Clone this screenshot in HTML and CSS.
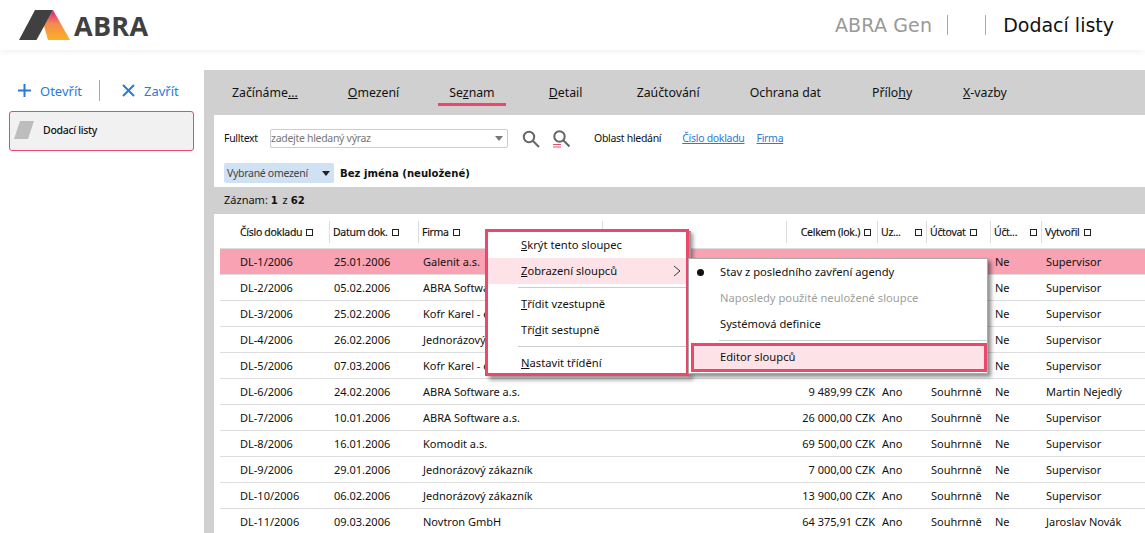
FILE: index.html
```html
<!DOCTYPE html>
<html lang="en">
<head>
  <meta charset="UTF-8">
  <title>Dodací listy</title>
  <link rel="stylesheet" href="styles.css">
</head>
<body>
<header class="top-bar">
  <div class="logo">
    <svg width="51" height="30" viewBox="0 0 51 30">
      <defs>
        <linearGradient id="logoGrad" x1="0.5" y1="0" x2="0.5" y2="1">
          <stop offset="0" stop-color="#e5148c"/>
          <stop offset="0.45" stop-color="#f38a50"/>
          <stop offset="1" stop-color="#fbb024"/>
        </linearGradient>
      </defs>
      <polygon points="34,0 51,30 29,30 25,16" fill="url(#logoGrad)"/>
      <polygon points="0,30 16,0 34,0 17.500,30" fill="#404040"/>
    </svg>
    <span class="logo-text">ABRA</span>
  </div>
  <div class="top-right">
    <span class="app-name">ABRA Gen</span>
    <span class="top-sep"></span>
    <span class="top-gap"></span>
    <span class="top-sep"></span>
    <span class="agenda-name">Dodací listy</span>
  </div>
</header>

<div class="layout">
  <aside class="sidebar">
    <div class="side-actions">
      <a class="side-btn">
        <svg width="15" height="15" viewBox="0 0 15 15"><path d="M7.500 1v13M1 7.500h13" stroke="#2a7ad6" stroke-width="2" fill="none"/></svg>
        Otevřít
      </a>
      <span class="side-sep"></span>
      <a class="side-btn">
        <svg width="15" height="15" viewBox="0 0 15 15"><path d="M2 2l11 11M13 2L2 13" stroke="#2a7ad6" stroke-width="2" fill="none"/></svg>
        Zavřít
      </a>
    </div>
    <div class="side-item">
      <svg width="20" height="18" viewBox="0 0 20 18"><polygon points="6,0 20,0 14,18 0,18" fill="#bdbdbd"/></svg>
      <span>Dodací listy</span>
    </div>
  </aside>

  <main class="main">
    <nav class="tabs">
      <span class="tab">Začínáme<u>...</u></span>
      <span class="tab"><u>O</u>mezení</span>
      <span class="tab active">Se<u>z</u>nam</span>
      <span class="tab"><u>D</u>etail</span>
      <span class="tab">Zaúčtování</span>
      <span class="tab">Ochrana dat</span>
      <span class="tab">Přílo<u>h</u>y</span>
      <span class="tab"><u>X</u>-vazby</span>
    </nav>

    <section class="filter-panel">
      <div class="search-row">
        <span class="search-label">Fulltext</span>
        <div class="search-box">
          <span>zadejte hledaný výraz</span>
          <i class="caret caret-grey"></i>
        </div>
        <svg class="search-icon" width="18" height="18" viewBox="0 0 18 18"><circle cx="7" cy="7" r="5.200" stroke="#666" stroke-width="2" fill="none"/><path d="M11 11l6 6" stroke="#666" stroke-width="2"/></svg>
        <svg class="search-icon" width="18" height="18" viewBox="0 0 18 18"><circle cx="7.500" cy="6.500" r="5.200" stroke="#666" stroke-width="2" fill="none"/><path d="M11.500 10.500l6 6" stroke="#666" stroke-width="2"/><path d="M1 14.500h8M1 17h8" stroke="#e0506e" stroke-width="1"/></svg>
        <span class="scope-label">Oblast hledání</span>
        <a class="scope-link first-link">Číslo dokladu</a>
        <a class="scope-link">Firma</a>
      </div>
      <div class="limit-row">
        <div class="limit-select">Vybrané omezení <i class="caret"></i></div>
        <b class="limit-name">Bez jména (neuložené)</b>
      </div>
    </section>

    <div class="record-bar">Záznam: <b>1</b> z <b>62</b></div>

    <section class="grid">
      <div class="row head">
        <div class="first">Číslo dokladu <i class="box"></i></div>
        <div>Datum dok. <i class="box"></i></div>
        <div>Firma <i class="box"></i></div>
        <div></div>
        <div class="right">Celkem (lok.) <i class="box"></i></div>
        <div class="spread">Uz... <i class="box"></i></div>
        <div>Účtovat <i class="box"></i></div>
        <div class="spread">Účt... <i class="box"></i></div>
        <div>Vytvořil <i class="box"></i></div>
      </div>
      <!-- first five rows: the cells under the menus stay empty -->
      <div class="row selected"><div class="first">DL-1/2006</div><div>25.01.2006</div><div>Galenit a.s.</div><div></div><div></div><div></div><div>Souhrnně</div><div>Ne</div><div>Supervisor</div></div>
      <div class="row"><div class="first">DL-2/2006</div><div>05.02.2006</div><div>ABRA Software a.s.</div><div></div><div></div><div></div><div></div><div>Ne</div><div>Supervisor</div></div>
      <div class="row"><div class="first">DL-3/2006</div><div>25.02.2006</div><div>Kofr Karel - elektro</div><div></div><div></div><div></div><div></div><div>Ne</div><div>Supervisor</div></div>
      <div class="row"><div class="first">DL-4/2006</div><div>26.02.2006</div><div>Jednorázový zákazník</div><div></div><div></div><div></div><div></div><div>Ne</div><div>Supervisor</div></div>
      <div class="row"><div class="first">DL-5/2006</div><div>07.03.2006</div><div>Kofr Karel - elektro</div><div></div><div></div><div></div><div></div><div>Ne</div><div>Supervisor</div></div>
      <div class="row"><div class="first">DL-6/2006</div><div>24.02.2006</div><div>ABRA Software a.s.</div><div></div><div class="right">9 489,99 CZK</div><div>Ano</div><div>Souhrnně</div><div>Ne</div><div>Martin Nejedlý</div></div>
      <div class="row"><div class="first">DL-7/2006</div><div>10.01.2006</div><div>ABRA Software a.s.</div><div></div><div class="right">26 000,00 CZK</div><div>Ano</div><div>Souhrnně</div><div>Ne</div><div>Supervisor</div></div>
      <div class="row"><div class="first">DL-8/2006</div><div>16.01.2006</div><div>Komodit a.s.</div><div></div><div class="right">69 500,00 CZK</div><div>Ano</div><div>Souhrnně</div><div>Ne</div><div>Supervisor</div></div>
      <div class="row"><div class="first">DL-9/2006</div><div>29.01.2006</div><div>Jednorázový zákazník</div><div></div><div class="right">7 000,00 CZK</div><div>Ano</div><div>Souhrnně</div><div>Ne</div><div>Supervisor</div></div>
      <div class="row"><div class="first">DL-10/2006</div><div>06.02.2006</div><div>Jednorázový zákazník</div><div></div><div class="right">13 900,00 CZK</div><div>Ano</div><div>Souhrnně</div><div>Ne</div><div>Supervisor</div></div>
      <div class="row"><div class="first">DL-11/2006</div><div>09.03.2006</div><div>Novtron GmbH</div><div></div><div class="right">64 375,91 CZK</div><div>Ano</div><div>Souhrnně</div><div>Ne</div><div>Jaroslav Novák</div></div>
    </section>
  </main>
</div>

<!-- context menus lie over the grid -->
<div class="menu main-menu">
  <div class="menu-item"><u>S</u>krýt tento sloupec</div>
  <div class="menu-item hover"><u>Z</u>obrazení sloupců
    <svg class="arrow" width="8" height="12" viewBox="0 0 8 12"><path d="M1 1l6 5-6 5" stroke="#333" fill="none"/></svg>
  </div>
  <div class="menu-line"></div>
  <div class="menu-item"><u>T</u>řídit vzestupně</div>
  <div class="menu-item">Tří<u>d</u>it sestupně</div>
  <div class="menu-line"></div>
  <div class="menu-item"><u>N</u>astavit třídění</div>
</div>

<div class="menu sub-menu">
  <div class="menu-item"><i class="dot"></i>Stav z posledního zavření agendy</div>
  <div class="menu-item disabled">Naposledy použité neuložené sloupce</div>
  <div class="menu-item">Systémová definice</div>
  <div class="menu-line"></div>
  <div class="menu-item marked">Editor sloupců</div>
</div>
</body>
</html>
```

FILE: styles.css
```css
* {
  box-sizing: border-box;
}

html, body {
  margin: 0;
  height: 533px;
  overflow: hidden;
}

body {
  background-color: #fff;
  color: #111;
  font-family: "Noto Sans", "Open Sans", sans-serif;
  font-size: 11px;
}

.top-bar {
  display: flex;
  justify-content: space-between;
  align-items: center;
  height: 50px;
  padding: 0 31px 0 19px;
  box-shadow: 0 2px 6px rgba(0, 0, 0, 0.06);
}

.logo {
  display: flex;
  align-items: center;
  gap: 4px;
}

.logo-text {
  font-family: "Open Sans", sans-serif;
  font-weight: 700;
  font-size: 27px;
  letter-spacing: 0.3px;
  color: #404040;
}

.top-right {
  display: flex;
  align-items: center;
  font-family: "DejaVu Sans", sans-serif;
  font-size: 19px;
}

.app-name {
  color: #999;
  letter-spacing: 0.15px;
  margin-right: 15px;
}

.top-sep {
  width: 1px;
  height: 20px;
  background-color: #a9a6bd;
}

.top-gap {
  width: 37px;
}

.agenda-name {
  color: #111;
  margin-left: 17px;
}

.layout {
  display: flex;
  padding-top: 20px;
}

.sidebar {
  width: 204px;
  flex: none;
  padding: 0 10px 0 9px;
}

.side-actions {
  display: flex;
  align-items: center;
  height: 41px;
  padding-left: 8px;
}

.side-btn {
  display: flex;
  align-items: center;
  gap: 8px;
  color: #2a7ad6;
  font-size: 13px;
}

.side-sep {
  width: 1px;
  height: 21px;
  background-color: #a9a6bd;
  margin: 0 21px 0 17px;
}

.side-item {
  display: flex;
  align-items: center;
  gap: 9px;
  height: 40px;
  padding: 0 0 2px 4px;
  background-color: #f1f1f1;
  border: 1px solid #ee476c;
  border-radius: 3px;
  font-size: 10.500px;
  font-weight: 500;
  letter-spacing: -0.3px;
}

.main {
  flex: 1;
  background-color: #d0d0d0;
  padding-left: 10px;
}

.tabs {
  display: flex;
  gap: 28px;
  height: 45px;
  align-items: flex-start;
  padding: 12px 0 0 17px;
  margin-left: -10px;
  font-size: 12.300px;
}

.tab {
  min-width: 64px;
  padding: 2px 11px 2px;
  text-align: center;
  white-space: nowrap;
  border-bottom: 3px solid transparent;
}

.tab.active {
  border-bottom-color: #ee476c;
}

.filter-panel {
  background-color: #fff;
  height: 72px;
  padding: 14px 0 0 10px;
}

.search-row {
  display: flex;
  align-items: center;
  height: 19px;
  font-size: 10.500px;
  letter-spacing: -0.3px;
}

.search-label {
  width: 46px;
  padding-bottom: 1px;
}

.search-box {
  display: flex;
  justify-content: space-between;
  align-items: center;
  width: 238px;
  height: 19px;
  padding: 0 4px 1px 0;
  border: 1px solid #ccc;
  border-radius: 2px;
  color: #777;
}

.caret {
  display: inline-block;
  width: 0;
  height: 0;
  border-left: 4px solid transparent;
  border-right: 4px solid transparent;
  border-top: 5px solid #222;
}

.caret-grey {
  border-top-color: #777;
}

.search-icon {
  margin-left: 14px;
}

.search-icon + .search-icon {
  margin-left: 12px;
}

.scope-label {
  margin-left: 24px;
  padding-bottom: 1px;
}

.scope-link {
  margin-left: 12px;
  padding-bottom: 1px;
  color: #2a7ad6;
  text-decoration: underline;
}

.first-link {
  margin-left: 21px;
}

.limit-row {
  display: flex;
  align-items: center;
  margin-top: 15px;
}

.limit-select {
  display: flex;
  justify-content: space-between;
  align-items: center;
  width: 110px;
  height: 20px;
  padding: 0 4px 0 3px;
  background-color: #cfe1f3;
  border-radius: 2px;
  color: #444;
  font-size: 10.500px;
  letter-spacing: -0.3px;
}

.limit-name {
  margin-left: 6px;
  font-family: "DejaVu Sans", sans-serif;
  font-size: 10.100px;
}

.record-bar {
  height: 27px;
  line-height: 26px;
  padding-left: 10px;
}

.record-bar b {
  font-family: "DejaVu Sans", sans-serif;
  font-size: 10.100px;
  margin-right: 2px;
}

.grid {
  background-color: #fff;
  padding-left: 6px;
}

.row {
  display: grid;
  grid-template-columns: 109px 89px 184px 184px 91px 49px 64px 51px 104px;
  height: 26px;
  align-items: center;
  border-bottom: 1px solid #ddd;
  white-space: nowrap;
}

.row > div {
  padding-left: 5px;
  overflow: hidden;
}

.row > .first {
  padding-left: 20px;
}

.row > .right {
  padding: 0 2px 0 0;
  text-align: right;
}

.row.head {
  height: 35px;
  padding-top: 2px;
  font-size: 10.500px;
  letter-spacing: -0.3px;
  -webkit-text-stroke: 0.15px #111;
}

.row.head > div {
  display: flex;
  align-items: center;
  gap: 4px;
  height: 22px;
  padding-left: 3px;
  border-left: 1px solid #ddd;
}

.row.head > .first {
  padding-left: 20px;
  border-left: none;
}

.row.head > .right {
  justify-content: flex-end;
  padding-right: 6px;
}

.row.head > .spread {
  justify-content: space-between;
  padding-right: 4px;
}

.row.selected {
  background-color: #f9a2b3;
}

.box {
  display: inline-block;
  flex: none;
  width: 7px;
  height: 7px;
  border: 1px solid #222;
}

.menu {
  position: absolute;
  background-color: #fff;
  font-size: 11.200px;
}

.main-menu {
  left: 485px;
  top: 229px;
  width: 204px;
  height: 147px;
  border: 3px solid #ee476c;
  box-shadow: 3px 1px 0 -1px #999, 4px 4px 4px rgba(0, 0, 0, 0.4);
}

.sub-menu {
  left: 688px;
  top: 258px;
  width: 300px;
  height: 116px;
  border: 1px solid #aaa;
  box-shadow: 3px 3px 4px rgba(0, 0, 0, 0.45);
}

.menu-item {
  position: relative;
  height: 26px;
  line-height: 25px;
  padding-left: 33px;
  white-space: nowrap;
}

.sub-menu .menu-item {
  padding-left: 31px;
}

.menu-item.hover {
  background-color: #fde3e8;
}

.menu-item.disabled {
  color: #a0a0a0;
}

.sub-menu .menu-item.marked {
  height: 29px;
  margin-left: 2px;
  padding-left: 26px;
  background-color: #fde3e8;
  border: 3px solid #ee476c;
  line-height: 22px;
}

.menu-line {
  height: 1px;
  margin: 3px 0 3px 30px;
  background-color: #ccc;
}

.sub-menu .menu-line {
  margin-bottom: 2px;
}

.arrow {
  position: absolute;
  right: 5px;
  top: 7px;
}

.dot {
  position: absolute;
  left: 8px;
  top: 10px;
  width: 7px;
  height: 7px;
  border-radius: 50%;
  background-color: #111;
}
```
